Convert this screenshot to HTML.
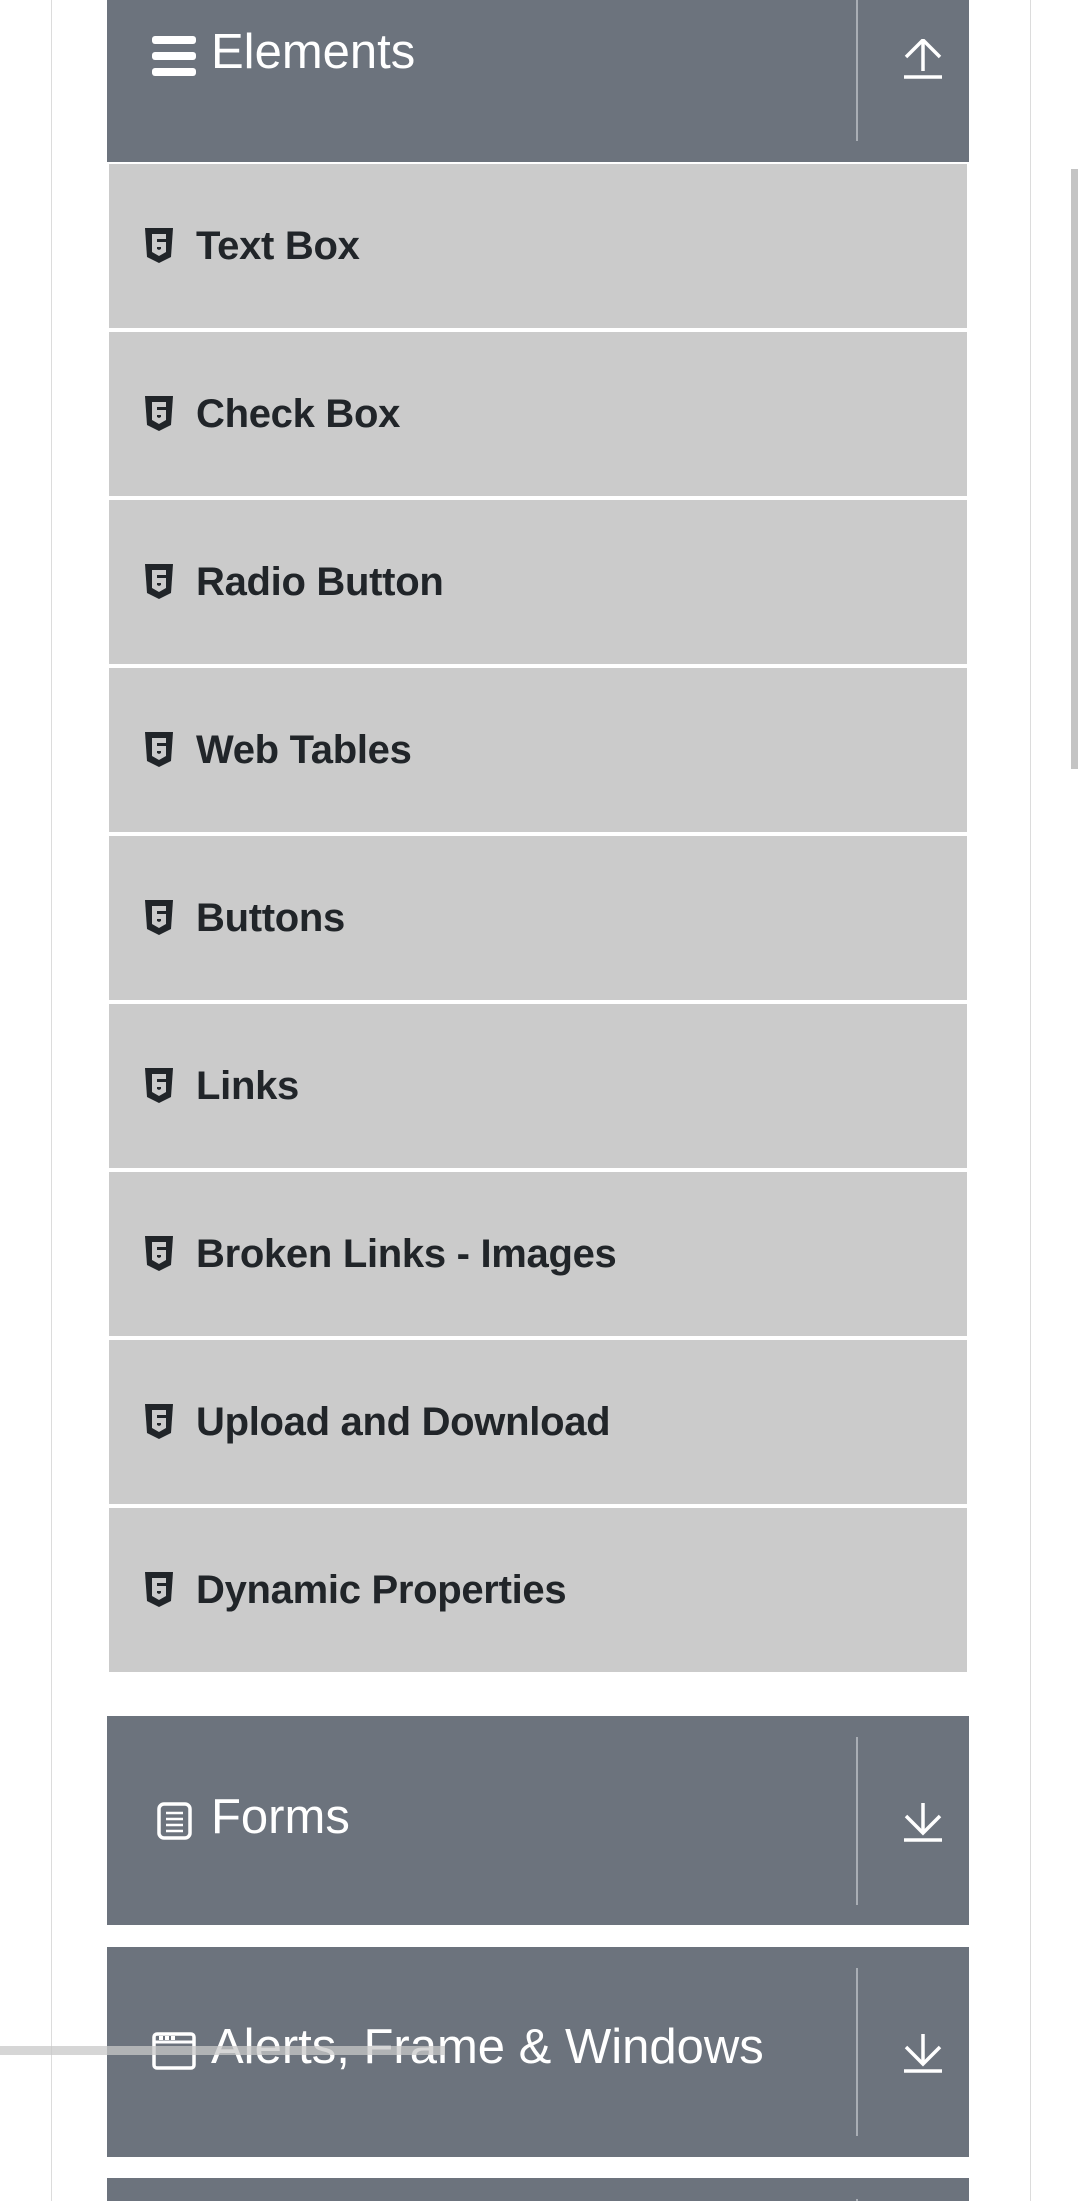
<!DOCTYPE html>
<html><head><meta charset="utf-8"><style>
html,body{margin:0;padding:0;width:1080px;height:2201px;background:#fff;overflow:hidden;position:relative;font-family:"Liberation Sans",sans-serif}
.a{position:absolute}
.hdr{position:absolute;left:107px;width:862px;background:#6c737d}
.div{position:absolute;left:749px;width:2px;background:#a9aeb5}
.ht{position:absolute;left:104px;color:#fff;font-size:49px;white-space:nowrap;line-height:1}
.item{position:absolute;left:109px;width:858px;height:164px;background:#cbcbcb}
.it{position:absolute;left:87px;top:62px;font-size:40px;font-weight:bold;color:#212529;line-height:1;white-space:nowrap;letter-spacing:-0.3px}
.ic{position:absolute;left:36px;top:64px}
</style></head><body>
<div class="a" style="left:51px;top:0;width:1px;height:2201px;background:#dcdcdc"></div>
<div class="a" style="left:1030px;top:0;width:1px;height:2201px;background:#dcdcdc"></div>
<div class="a" style="left:1071px;top:169px;width:7px;height:600px;background:#c4c4c4"></div>

<div class="hdr" style="top:-47px;height:209px">
  <div class="div" style="top:21px;height:167px"></div>
  <svg class="a" style="left:45px;top:80px" width="45" height="45" viewBox="0 0 45 45"><g fill="#fff"><rect x="0" y="3" width="44" height="8" rx="3"/><rect x="0" y="19" width="44" height="8" rx="3"/><rect x="0" y="35" width="44" height="8" rx="3"/></g></svg>
  <div class="ht" style="top:75px">Elements</div>
  <svg class="a" style="left:797px;top:86px" width="40" height="42" viewBox="0 0 40 42"><g stroke="#fff" stroke-width="3.5" fill="none"><line x1="19" y1="1" x2="19" y2="32"/><polyline points="2,18 19,1 36,18"/><line x1="0" y1="38" x2="38" y2="38"/></g></svg>
</div>

<div class="item" style="top:164px"><svg class="ic" width="28" height="36" viewBox="0 0 28 36"><path d="M0 0H28L26 29L14 35L2 29Z" fill="#212529"/><path d="M7 6H21V11H12V14H21V24L14 28L7 24V19H12V21L14 22L16 21V19H7Z" fill="#cbcbcb"/></svg><div class="it">Text Box</div></div>
<div class="item" style="top:332px"><svg class="ic" width="28" height="36" viewBox="0 0 28 36"><path d="M0 0H28L26 29L14 35L2 29Z" fill="#212529"/><path d="M7 6H21V11H12V14H21V24L14 28L7 24V19H12V21L14 22L16 21V19H7Z" fill="#cbcbcb"/></svg><div class="it">Check Box</div></div>
<div class="item" style="top:500px"><svg class="ic" width="28" height="36" viewBox="0 0 28 36"><path d="M0 0H28L26 29L14 35L2 29Z" fill="#212529"/><path d="M7 6H21V11H12V14H21V24L14 28L7 24V19H12V21L14 22L16 21V19H7Z" fill="#cbcbcb"/></svg><div class="it">Radio Button</div></div>
<div class="item" style="top:668px"><svg class="ic" width="28" height="36" viewBox="0 0 28 36"><path d="M0 0H28L26 29L14 35L2 29Z" fill="#212529"/><path d="M7 6H21V11H12V14H21V24L14 28L7 24V19H12V21L14 22L16 21V19H7Z" fill="#cbcbcb"/></svg><div class="it">Web Tables</div></div>
<div class="item" style="top:836px"><svg class="ic" width="28" height="36" viewBox="0 0 28 36"><path d="M0 0H28L26 29L14 35L2 29Z" fill="#212529"/><path d="M7 6H21V11H12V14H21V24L14 28L7 24V19H12V21L14 22L16 21V19H7Z" fill="#cbcbcb"/></svg><div class="it">Buttons</div></div>
<div class="item" style="top:1004px"><svg class="ic" width="28" height="36" viewBox="0 0 28 36"><path d="M0 0H28L26 29L14 35L2 29Z" fill="#212529"/><path d="M7 6H21V11H12V14H21V24L14 28L7 24V19H12V21L14 22L16 21V19H7Z" fill="#cbcbcb"/></svg><div class="it">Links</div></div>
<div class="item" style="top:1172px"><svg class="ic" width="28" height="36" viewBox="0 0 28 36"><path d="M0 0H28L26 29L14 35L2 29Z" fill="#212529"/><path d="M7 6H21V11H12V14H21V24L14 28L7 24V19H12V21L14 22L16 21V19H7Z" fill="#cbcbcb"/></svg><div class="it">Broken Links - Images</div></div>
<div class="item" style="top:1340px"><svg class="ic" width="28" height="36" viewBox="0 0 28 36"><path d="M0 0H28L26 29L14 35L2 29Z" fill="#212529"/><path d="M7 6H21V11H12V14H21V24L14 28L7 24V19H12V21L14 22L16 21V19H7Z" fill="#cbcbcb"/></svg><div class="it">Upload and Download</div></div>
<div class="item" style="top:1508px"><svg class="ic" width="28" height="36" viewBox="0 0 28 36"><path d="M0 0H28L26 29L14 35L2 29Z" fill="#212529"/><path d="M7 6H21V11H12V14H21V24L14 28L7 24V19H12V21L14 22L16 21V19H7Z" fill="#cbcbcb"/></svg><div class="it">Dynamic Properties</div></div>

<div class="hdr" style="top:1716px;height:209px">
  <div class="div" style="top:21px;height:168px"></div>
  <svg class="a" style="left:50px;top:86px" width="36" height="38" viewBox="0 0 36 38"><rect x="2" y="2" width="31" height="34" rx="5" fill="none" stroke="#fff" stroke-width="3.5"/><g stroke="#fff" stroke-width="2.5"><line x1="9" y1="11" x2="26" y2="11"/><line x1="9" y1="17" x2="26" y2="17"/><line x1="9" y1="23" x2="26" y2="23"/><line x1="9" y1="29" x2="26" y2="29"/></g></svg>
  <div class="ht" style="top:77px">Forms</div>
  <svg class="a" style="left:797px;top:86px" width="40" height="42" viewBox="0 0 40 42"><g stroke="#fff" stroke-width="3.5" fill="none"><line x1="19" y1="1" x2="19" y2="31"/><polyline points="2,14 19,31 36,14"/><line x1="0" y1="38" x2="38" y2="38"/></g></svg>
</div>

<div class="hdr" style="top:1947px;height:210px">
  <div class="div" style="top:21px;height:168px"></div>
  <svg class="a" style="left:45px;top:85px" width="45" height="38" viewBox="0 0 45 38"><rect x="2" y="2" width="40" height="34" rx="3" fill="none" stroke="#fff" stroke-width="3.5"/><line x1="2" y1="10" x2="42" y2="10" stroke="#fff" stroke-width="3"/><g fill="#fff"><rect x="7" y="4" width="4" height="4"/><rect x="13" y="4" width="4" height="4"/><rect x="19" y="4" width="4" height="4"/></g></svg>
  <div class="ht" style="top:76px">Alerts, Frame &amp; Windows</div>
  <svg class="a" style="left:797px;top:86px" width="40" height="42" viewBox="0 0 40 42"><g stroke="#fff" stroke-width="3.5" fill="none"><line x1="19" y1="1" x2="19" y2="31"/><polyline points="2,14 19,31 36,14"/><line x1="0" y1="38" x2="38" y2="38"/></g></svg>
</div>
<div class="a" style="left:0;top:2046px;width:445px;height:9px;background:rgba(200,200,200,0.75)"></div>

<div class="hdr" style="top:2178px;height:30px">
  <div class="div" style="top:21px;height:20px"></div>
</div>
</body></html>
